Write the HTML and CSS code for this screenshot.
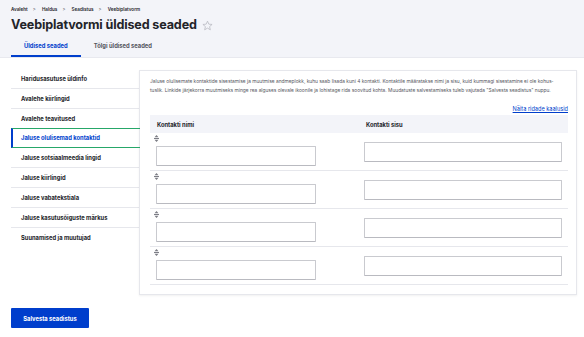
FILE: index.html
```html
<!doctype html>
<html>
<head>
    <meta charset="utf-8">
    <title>Veebiplatvormi üldised seaded</title>
    <link rel="stylesheet" href="styles.css">
</head>
<body>
<div class="pais">
    <div class="murupuru">
        <a href="#">Avaleht</a><span class="nool">&gt;</span>
        <a href="#">Haldus</a><span class="nool">&gt;</span>
        <a href="#">Seadistus</a><span class="nool">&gt;</span>
        <a href="#">Veebiplatvorm</a>
    </div>
    <h1 class="pealkiri">Veebiplatvormi üldised seaded
        <svg class="taht" width="11" height="11" viewBox="0 0 24 24"><path d="M12 2.5l2.9 6.6 7.1.6-5.4 4.7 1.6 7-6.2-3.7-6.2 3.7 1.6-7L2 9.7l7.1-.6z" fill="none" stroke="#b5b6be" stroke-width="1.6" stroke-linejoin="round"/></svg>
    </h1>
    <div class="sakid">
        <a href="#" class="sakk aktiivne">Üldised seaded</a>
        <a href="#" class="sakk">Tõlgi üldised seaded</a>
    </div>
</div>

<div class="sisu">
    <ul class="menyy">
        <li>Haridusasutuse üldinfo</li>
        <li>Avalehe kiirlingid</li>
        <li>Avalehe teavitused</li>
        <li class="valitud">Jaluse olulisemad kontaktid</li>
        <li>Jaluse sotsiaalmeedia lingid</li>
        <li>Jaluse kiirlingid</li>
        <li>Jaluse vabatekstiala</li>
        <li>Jaluse kasutusõiguste märkus</li>
        <li class="viimane">Suunamised ja muutujad</li>
    </ul>

    <div class="paneel">
        <p class="kirjeldus">Jaluse olulisemate kontaktide sisestamise ja muutmise andmeplokk, kuhu saab lisada kuni 4 kontakti. Kontaktile määratakse nimi ja sisu, kuid kummagi sisestamine ei ole kohus&shy;tuslik. Linkide järjekorra muutmiseks minge rea alguses olevale ikoonile ja lohistage rida soovitud kohta. Muudatuste salvestamiseks tuleb vajutada "Salvesta seadistus" nuppu.</p>
        <div class="kaalud"><a href="#">Näita ridade kaalusid</a></div>
        <table class="tabel">
            <thead>
            <tr>
                <th>Kontakti nimi</th>
                <th>Kontakti sisu</th>
            </tr>
            </thead>
            <tbody>
            <tr>
                <td class="nimi"><span class="lohista"><svg width="5" height="7" viewBox="0 0 5 7"><path d="M2.5 0L4.5 2.2H0.5z M0 3h5v1H0z M2.5 7L0.5 4.8h4z" fill="#7d7e86"/></svg></span><input type="text" class="vali"></td>
                <td class="sisuvali"><input type="text" class="vali lai"></td>
            </tr>
            <tr>
                <td class="nimi"><span class="lohista"><svg width="5" height="7" viewBox="0 0 5 7"><path d="M2.5 0L4.5 2.2H0.5z M0 3h5v1H0z M2.5 7L0.5 4.8h4z" fill="#7d7e86"/></svg></span><input type="text" class="vali"></td>
                <td class="sisuvali"><input type="text" class="vali lai"></td>
            </tr>
            <tr>
                <td class="nimi"><span class="lohista"><svg width="5" height="7" viewBox="0 0 5 7"><path d="M2.5 0L4.5 2.2H0.5z M0 3h5v1H0z M2.5 7L0.5 4.8h4z" fill="#7d7e86"/></svg></span><input type="text" class="vali"></td>
                <td class="sisuvali"><input type="text" class="vali lai"></td>
            </tr>
            <tr>
                <td class="nimi"><span class="lohista"><svg width="5" height="7" viewBox="0 0 5 7"><path d="M2.5 0L4.5 2.2H0.5z M0 3h5v1H0z M2.5 7L0.5 4.8h4z" fill="#7d7e86"/></svg></span><input type="text" class="vali"></td>
                <td class="sisuvali"><input type="text" class="vali lai"></td>
            </tr>
            </tbody>
        </table>
    </div>
</div>

<div class="nupud">
    <button type="button" class="nupp">Salvesta seadistus</button>
</div>
</body>
</html>
```

FILE: styles.css
```css
body {
    margin: 0;
    background: #ffffff;
    font-family: Inter, "Liberation Sans", sans-serif;
    color: #232429;
}

a {
    text-decoration: none;
    color: inherit;
}

.pais {
    background: #f3f4f9;
    padding: 6px 11px 0 11px;
    border-bottom: 1px solid #e8e9ef;
}

.murupuru {
    font-size: 4.6px;
    font-weight: 600;
    line-height: 8px;
}

.nool {
    margin: 0 5px;
    font-weight: 400;
    color: #55565e;
}

.pealkiri {
    margin: 2px 0 0 0;
    font-size: 12.6px;
    line-height: 18px;
    font-weight: 700;
    letter-spacing: -0.15px;
    display: flex;
    align-items: center;
}

.taht {
    margin-left: 5px;
}

.sakid {
    display: flex;
    margin-top: 4px;
}

.sakk {
    font-size: 5.8px;
    font-weight: 700;
    color: #55565e;
    padding: 0 13px;
    height: 17px;
    line-height: 16px;
    border-bottom: 2px solid transparent;
}

.sakk.aktiivne {
    color: #003ecc;
    border-bottom-color: #003ecc;
}

.sisu {
    display: flex;
    align-items: flex-start;
    padding: 11px 7px 0 11px;
}

.menyy {
    list-style: none;
    margin: 0;
    padding: 0;
    width: 128px;
    flex-shrink: 0;
}

.menyy li {
    font-size: 5.8px;
    font-weight: 700;
    height: 19px;
    line-height: 19px;
    padding-left: 10px;
    border-bottom: 1px solid #e6e7ec;
}

.menyy li.valitud {
    color: #003ecc;
    border-top: 1px solid #26a769;
    border-bottom: 1px solid #26a769;
    border-left: 2px solid #003ecc;
    padding-left: 8px;
    height: 18px;
    margin-top: -1px;
    margin-right: -1px;
    line-height: 18px;
    position: relative;
}

.menyy li.viimane {
    border-bottom: none;
}

.paneel {
    flex: 1;
    border: 1px solid #e6e7ec;
    box-shadow: 0 1px 2px rgba(0, 0, 0, 0.06);
    padding: 6px 8px 9px 10px;
    margin-top: 1px;
}

.kirjeldus {
    margin: 0;
    padding-right: 9px;
    font-size: 4.85px;
    line-height: 9px;
    color: #55565e;
    hyphens: manual;
}

.kaalud {
    text-align: right;
    margin-top: 10px;
    font-size: 5.6px;
    line-height: 9px;
}

.kaalud a {
    color: #003ecc;
    text-decoration: underline;
}

.tabel {
    width: 100%;
    border-collapse: collapse;
    margin-top: 1px;
}

.tabel th {
    background: #f3f4f9;
    text-align: left;
    font-size: 5.8px;
    font-weight: 700;
    height: 18px;
    padding: 0 7px;
    width: 50%;
}

.tabel td {
    border-bottom: 1px solid #e6e7ec;
    padding: 0 6px 4px 6px;
}

.tabel td.sisuvali {
    vertical-align: middle;
    padding: 0 6px 0 5px;
}

.lohista {
    display: flex;
    align-items: center;
    height: 10px;
    margin-left: -2px;
    margin-bottom: 3px;
}

.vali {
    display: block;
    box-sizing: border-box;
    height: 20px;
    width: 160px;
    margin: 0;
    border: 1px solid #c9cacf;
    border-bottom-color: #b9bac0;
    border-radius: 1px;
    background: #fff;
}

.vali.lai {
    width: 198px;
}

.nupud {
    padding: 13px 11px 0 11px;
}

.nupp {
    display: block;
    background: #003ecc;
    color: #fff;
    border: none;
    border-radius: 1px;
    font-family: Inter, "Liberation Sans", sans-serif;
    font-size: 5.8px;
    font-weight: 700;
    width: 78px;
    height: 20px;
    padding: 0;
}
```
